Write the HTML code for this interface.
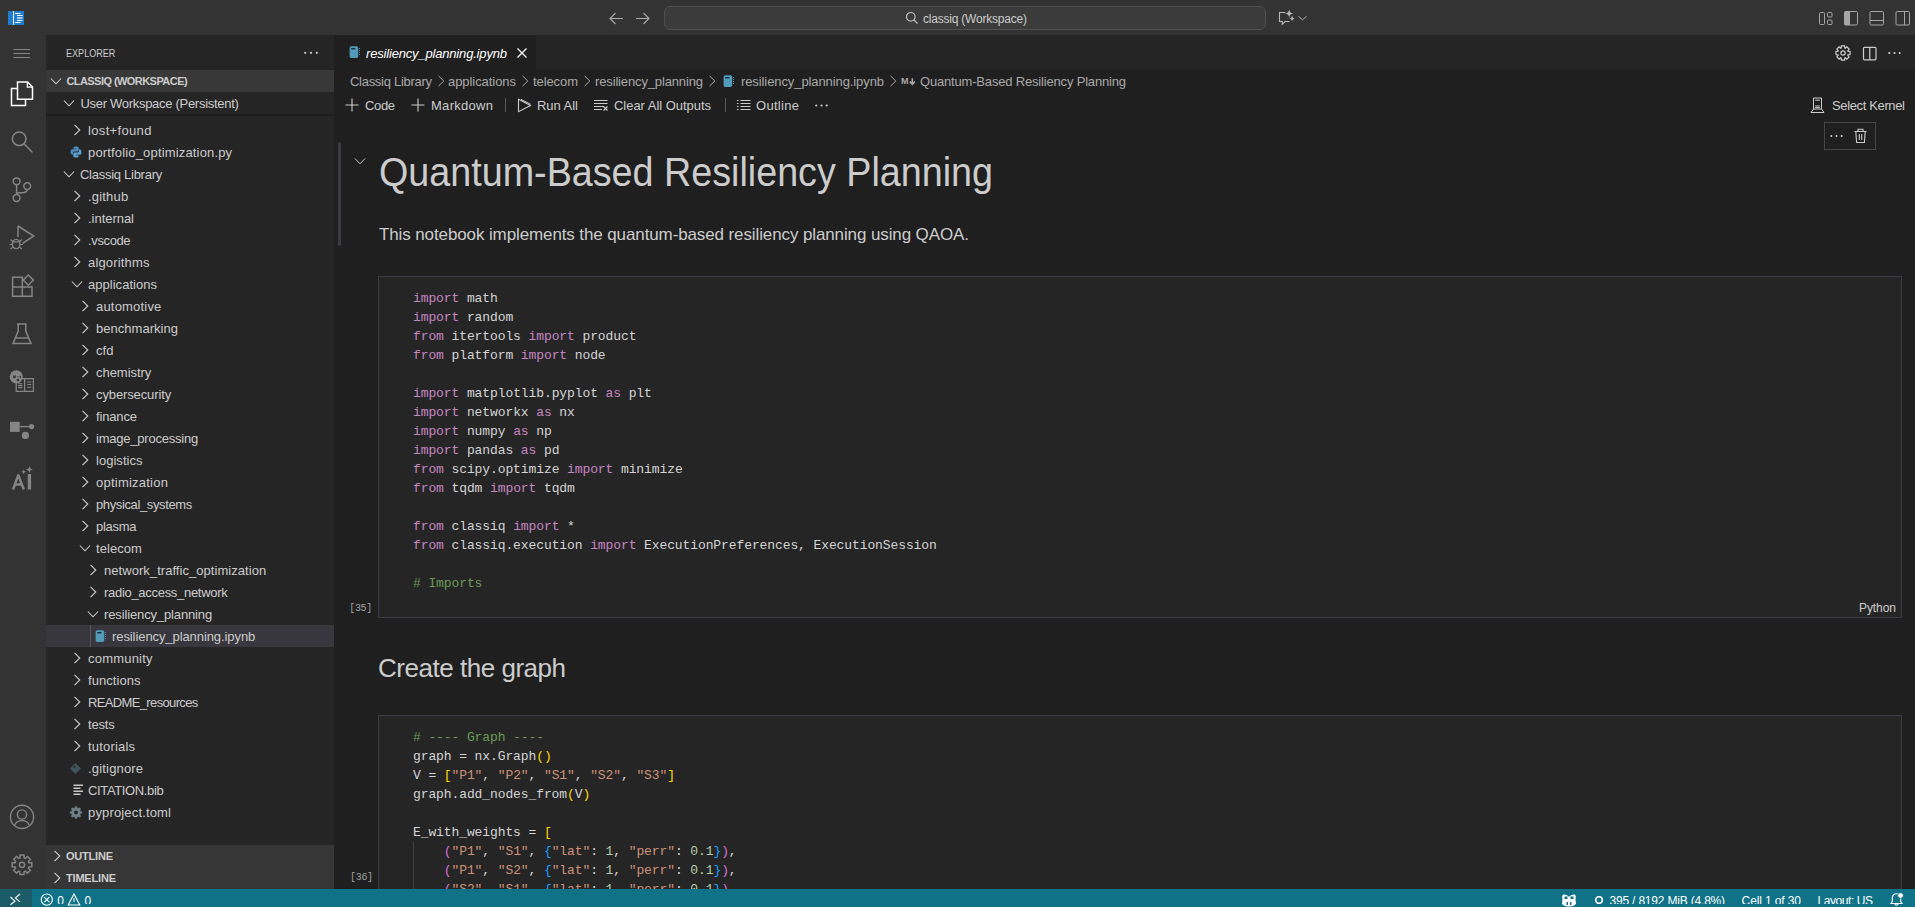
<!DOCTYPE html><html><head><meta charset="utf-8"><style>
*{box-sizing:border-box;margin:0;padding:0}
html,body{width:1915px;height:907px;overflow:hidden;background:#1f1f1f;font-family:"Liberation Sans",sans-serif;color:#cccccc}
div,span,svg{position:absolute}
.t{white-space:nowrap}
svg{overflow:visible}
.code{font-family:"Liberation Mono",monospace;white-space:pre;color:#d4d4d4}
.kw{color:#c586c0}.cm{color:#6a9955}.st{color:#ce9178}.nu{color:#b5cea8}.b1{color:#ffd700}.b2{color:#da70d6}.b3{color:#179fff}
</style></head><body><div style="left:0px;top:0px;width:1915px;height:35px;background:#333333;"></div>
<div style="left:0px;top:35px;width:46px;height:854px;background:#333333;"></div>
<div style="left:46px;top:35px;width:288px;height:854px;background:#252526;"></div>
<div style="left:334px;top:35px;width:1581px;height:35px;background:#252526;"></div>
<div style="left:334px;top:70px;width:1581px;height:819px;background:#1f1f1f;"></div>
<div style="left:0px;top:889px;width:1915px;height:18px;background:#0f7287;"></div>
<svg style="left:8px;top:11px;" width="17" height="15" viewBox="0 0 17 15"><rect x="0" y="0" width="16" height="14" fill="#1f7dd0"/><rect x="5" y="0" width="1" height="14" fill="#fff"/><rect x="7" y="2" width="5.5" height="1" fill="#fff"/><rect x="9" y="4" width="5.5" height="1" fill="#fff"/><rect x="9" y="6" width="5.5" height="2" fill="#a9c9e8"/><rect x="9" y="9" width="5.5" height="1" fill="#fff"/><rect x="7" y="11" width="5.5" height="1" fill="#fff"/></svg>
<svg style="left:609px;top:12px;" width="16" height="13" viewBox="0 0 16 13"><polyline points="6.5,1 1,6.5 6.5,12" fill="none" stroke="#a8a8a8" stroke-width="1.1"/><line x1="1" y1="6.5" x2="14" y2="6.5" stroke="#a8a8a8" stroke-width="1.1"/></svg>
<svg style="left:635px;top:12px;" width="16" height="13" viewBox="0 0 16 13"><polyline points="8.5,1 14,6.5 8.5,12" fill="none" stroke="#a8a8a8" stroke-width="1.1"/><line x1="1" y1="6.5" x2="14" y2="6.5" stroke="#a8a8a8" stroke-width="1.1"/></svg>
<div style="left:664px;top:6px;width:602px;height:24px;background:#3b3b3b;border:1px solid #4f4f4f;border-radius:6px;"></div>
<svg style="left:905px;top:11px;" width="14" height="14" viewBox="0 0 14 14"><circle cx="5.8" cy="5.8" r="4.3" fill="none" stroke="#bdbdbd" stroke-width="1.2"/><line x1="8.8" y1="8.8" x2="12.6" y2="12.6" stroke="#bdbdbd" stroke-width="1.3"/></svg>
<span class="t" style="left:923.00px;top:12.74px;font-size:12px;line-height:13.404px;height:13.40px;color:#cccccc;font-weight:normal;font-style:normal;letter-spacing:-0.212px;">classiq (Workspace)</span>
<svg style="left:1276px;top:8px;" width="34" height="20" viewBox="0 0 34 20"><path d="M9.3,4.5 H3.5 V13.5 H6.2 V16.3 L9.2,13.5 H13.5" fill="none" stroke="#b8b8b8" stroke-width="1.1"/><path d="M13.2,1.2999999999999998 C13.788,4.324 14.376,4.912 17.4,5.5 C14.376,6.088 13.788,6.676 13.2,9.7 C12.611999999999998,6.676 12.024,6.088 9.0,5.5 C12.024,4.912 12.611999999999998,4.324 13.2,1.2999999999999998Z" fill="#b8b8b8"/><path d="M16.1,7.4 C16.534000000000002,9.632 16.968,10.066 19.200000000000003,10.5 C16.968,10.934 16.534000000000002,11.368 16.1,13.6 C15.666000000000002,11.368 15.232000000000001,10.934 13.000000000000002,10.5 C15.232000000000001,10.066 15.666000000000002,9.632 16.1,7.4Z" fill="#b8b8b8"/><path d="M22.4,8.3 L26.5,11.8 L30.6,8.3" fill="none" stroke="#b0b0b0" stroke-width="1"/></svg>
<svg style="left:1818px;top:11px;" width="16" height="15" viewBox="0 0 16 15"><rect x="1.5" y="1.5" width="5" height="12" rx="1" fill="none" stroke="#a6a6a6" stroke-width="1"/><rect x="9.5" y="1.5" width="4.5" height="4.5" rx="1" fill="none" stroke="#a6a6a6" stroke-width="1"/><rect x="9.5" y="9" width="4.5" height="4.5" rx="1" fill="none" stroke="#a6a6a6" stroke-width="1"/></svg>
<svg style="left:1843px;top:11px;" width="16" height="15" viewBox="0 0 16 15"><rect x="1.5" y="0.5" width="13" height="13.5" rx="1.2" fill="none" stroke="#a6a6a6" stroke-width="1"/><rect x="1.5" y="0.5" width="5.5" height="13.5" fill="#a6a6a6"/></svg>
<svg style="left:1869px;top:11px;" width="16" height="15" viewBox="0 0 16 15"><rect x="1" y="0.5" width="13.5" height="13.5" rx="1.2" fill="none" stroke="#a6a6a6" stroke-width="1"/><line x1="1" y1="9.5" x2="14.5" y2="9.5" stroke="#a6a6a6" stroke-width="1"/></svg>
<svg style="left:1895px;top:11px;" width="16" height="15" viewBox="0 0 16 15"><rect x="1" y="0.5" width="13.5" height="13.5" rx="1.2" fill="none" stroke="#a6a6a6" stroke-width="1"/><line x1="9.5" y1="0.5" x2="9.5" y2="14" stroke="#a6a6a6" stroke-width="1"/></svg>
<svg style="left:13px;top:48px;" width="18" height="12" viewBox="0 0 18 12"><line x1="0.5" y1="1.5" x2="17" y2="1.5" stroke="#858585" stroke-width="1"/><line x1="0.5" y1="5.5" x2="17" y2="5.5" stroke="#858585" stroke-width="1"/><line x1="0.5" y1="9.5" x2="17" y2="9.5" stroke="#858585" stroke-width="1"/></svg>
<svg style="left:10px;top:81px;" width="24" height="26" viewBox="0 0 24 26"><path d="M7.5,7.5 H1.5 V24.5 H15.5 V18.5" fill="none" stroke="#ffffff" stroke-width="1.5"/><path d="M7.5,1 H17.5 L22.5,6 V18.2 H7.5 Z" fill="none" stroke="#ffffff" stroke-width="1.5"/><path d="M17.3,1.5 V6.2 H22" fill="none" stroke="#ffffff" stroke-width="1.2"/></svg>
<svg style="left:10px;top:130px;" width="24" height="24" viewBox="0 0 24 24"><circle cx="9.2" cy="8.8" r="6.8" fill="none" stroke="#858585" stroke-width="1.5"/><line x1="14" y1="13.8" x2="22.5" y2="22.5" stroke="#858585" stroke-width="1.5"/></svg>
<svg style="left:10px;top:176px;" width="24" height="26" viewBox="0 0 24 26"><circle cx="6.6" cy="5.3" r="3.4" fill="none" stroke="#858585" stroke-width="1.5"/><circle cx="17.2" cy="10.1" r="3.4" fill="none" stroke="#858585" stroke-width="1.5"/><circle cx="6.6" cy="22" r="3.4" fill="none" stroke="#858585" stroke-width="1.5"/><path d="M6.6,8.7 V18.6" stroke="#858585" stroke-width="1.5" fill="none"/><path d="M17.2,13.5 C17.2,16 15,16.7 12,16.7 H9 C7.5,16.7 6.6,17.5 6.6,18.6" stroke="#858585" stroke-width="1.5" fill="none"/></svg>
<svg style="left:8px;top:224px;" width="28" height="26" viewBox="0 0 28 26"><path d="M10,2 L25.8,12 L14.5,19.3" fill="none" stroke="#858585" stroke-width="1.5"/><path d="M10,2 V13" fill="none" stroke="#858585" stroke-width="1.5"/><ellipse cx="8.2" cy="20" rx="3.8" ry="4.6" fill="none" stroke="#858585" stroke-width="1.4"/><path d="M5,17.8 H11.4 M2.5,15.5 L5,17.5 M13.9,15.5 L11.4,17.5 M1.5,20.5 H4.4 M12,20.5 H15 M2.5,25 L5,23 M13.9,25 L11.4,23" stroke="#858585" stroke-width="1.2" fill="none"/></svg>
<svg style="left:10px;top:272px;" width="24" height="26" viewBox="0 0 24 26"><path d="M2.6,5.3 H12.3 V24.2 H2.6 Z M2.6,15 H22 V24.2 H12.3" fill="none" stroke="#858585" stroke-width="1.5"/><path d="M18.3,3 L23.4,8.1 18.3,13.2 13.2,8.1 Z" fill="none" stroke="#858585" stroke-width="1.5"/></svg>
<svg style="left:10px;top:320px;" width="24" height="26" viewBox="0 0 24 26"><path d="M7,4 H16.7 M8.2,4 V11 L3,23.6 H21 L15.8,11 V4 M5.4,18 H18.6" fill="none" stroke="#858585" stroke-width="1.5"/></svg>
<svg style="left:8px;top:368px;" width="28" height="26" viewBox="0 0 28 26"><path d="M8.2,10.7 V23.4 H16.6 V10.7 Z M16.6,10.7 V23.4 H25.4 V10.7 Z" fill="#333" stroke="#858585" stroke-width="1.3"/><path d="M10.2,15.8 H14.4 M10.2,17.6 H14.4 M10.2,19.6 H14.4 M19.2,14 H23.2 M19.2,16.5 H23.2 M19.2,19.3 H23.2" stroke="#858585" stroke-width="1.1"/><circle cx="8.3" cy="8.8" r="6.6" fill="#858585"/><rect x="5.2" y="7.5" width="2.6" height="2.6" fill="#333"/><rect x="8.8" y="8.2" width="1.8" height="1.2" fill="#5a5a5a"/><circle cx="12.3" cy="8.8" r="0.9" fill="#333"/><circle cx="9.9" cy="12" r="1.3" fill="#333"/></svg>
<svg style="left:8px;top:418px;" width="28" height="22" viewBox="0 0 28 22"><rect x="2" y="3.8" width="9.7" height="10.1" fill="#858585"/><line x1="11.7" y1="8.6" x2="23" y2="8.6" stroke="#858585" stroke-width="1.4"/><circle cx="23.6" cy="8.6" r="2.6" fill="#858585"/><circle cx="17.4" cy="17.4" r="3.6" fill="#858585"/></svg>
<svg style="left:8px;top:470px;" width="22" height="22" viewBox="0 0 22 22"><path d="M5,19.5 L10.3,5.2 L15.8,19.5 M7,14.5 H13.8" fill="none" stroke="#858585" stroke-width="2.4" stroke-linejoin="round"/></svg>
<svg style="left:26px;top:466px;" width="10" height="26" viewBox="0 0 10 26"><rect x="1.8" y="8" width="3.3" height="15.5" fill="#858585"/><path d="M3.4,0 L4.3,2.6 6.9,3.5 4.3,4.4 3.4,7 2.5,4.4 -0.1,3.5 2.5,2.6Z" fill="#858585"/><path d="M-2.4,3.4 L-1.7,5.1 0,5.8 -1.7,6.5 -2.4,8.2 -3.1,6.5 -4.8,5.8 -3.1,5.1Z" fill="#858585"/></svg>
<svg style="left:9px;top:804px;" width="26" height="26" viewBox="0 0 26 26"><circle cx="13" cy="12.9" r="11.6" fill="none" stroke="#858585" stroke-width="1.4"/><circle cx="13" cy="10.5" r="4.6" fill="none" stroke="#858585" stroke-width="1.4"/><path d="M6,21 C6.8,17.8 9.5,16.6 13,16.6 C16.5,16.6 19.2,17.8 20,21" fill="none" stroke="#858585" stroke-width="1.4"/></svg>
<svg style="left:9px;top:852px;" width="26" height="26" viewBox="0 0 26 26"><polygon points="10.87,5.92 11.01,3.00 14.99,3.00 15.13,5.92 16.36,6.43 18.53,4.47 21.33,7.27 19.37,9.44 19.88,10.67 22.80,10.81 22.80,14.79 19.88,14.93 19.37,16.16 21.33,18.33 18.53,21.13 16.36,19.17 15.13,19.68 14.99,22.60 11.01,22.60 10.87,19.68 9.64,19.17 7.47,21.13 4.67,18.33 6.63,16.16 6.12,14.93 3.20,14.79 3.20,10.81 6.12,10.67 6.63,9.44 4.67,7.27 7.47,4.47 9.64,6.43" fill="none" stroke="#858585" stroke-width="1.5" stroke-linejoin="miter"/><circle cx="13" cy="12.8" r="2.6" fill="none" stroke="#858585" stroke-width="1.5"/></svg>
<span class="t" style="left:66.40px;top:47.34px;font-size:11px;line-height:12.287px;height:12.29px;color:#cccccc;font-weight:normal;font-style:normal;letter-spacing:0.000px;transform:scaleX(0.8246);transform-origin:0 0;">EXPLORER</span>
<svg style="left:303px;top:50px;" width="18" height="6" viewBox="0 0 18 6"><circle cx="2.2" cy="2.8" r="1.1" fill="#cccccc"/><circle cx="8" cy="2.8" r="1.1" fill="#cccccc"/><circle cx="13.8" cy="2.8" r="1.1" fill="#cccccc"/></svg>
<div style="left:46px;top:70px;width:288px;height:22px;background:#383838;"></div>
<svg style="left:50px;top:77px;" width="12" height="8" viewBox="0 0 12 8"><polyline points="0.9,1.5 6,6.8 11.1,1.5" fill="none" stroke="#d0d0d0" stroke-width="1.05"/></svg>
<span class="t" style="left:66.40px;top:75.34px;font-size:11px;line-height:12.287px;height:12.29px;color:#cccccc;font-weight:bold;font-style:normal;letter-spacing:-0.555px;">CLASSIQ (WORKSPACE)</span>
<div style="left:46px;top:92px;width:288px;height:22px;background:#252526;"></div>
<svg style="left:63px;top:99px;" width="12" height="8" viewBox="0 0 12 8"><polyline points="0.9,1.5 6,6.8 11.1,1.5" fill="none" stroke="#d0d0d0" stroke-width="1.05"/></svg>
<span class="t" style="left:80.40px;top:96.64px;font-size:13px;line-height:14.521px;height:14.52px;color:#cccccc;font-weight:normal;font-style:normal;letter-spacing:-0.289px;">User Workspace (Persistent)</span>
<div style="left:46px;top:114px;width:288px;height:3px;background:linear-gradient(#1a1a1a,#252526);"></div>
<svg style="left:73px;top:124px;" width="8" height="12" viewBox="0 0 8 12"><polyline points="1.5,0.9 6.8,6 1.5,11.1" fill="none" stroke="#d0d0d0" stroke-width="1.05"/></svg>
<span class="t" style="left:88.00px;top:123.64px;font-size:13px;line-height:14.521px;height:14.52px;color:#cccccc;font-weight:normal;font-style:normal;letter-spacing:0.338px;">lost+found</span>
<svg style="left:70px;top:146px;" width="12" height="12" viewBox="0 0 12 12"><path d="M5.8,0.5 C3.2,0.5 3.4,1.6 3.4,1.6 V2.8 H5.9 V3.2 H2.3 C2.3,3.2 0.5,3 0.5,5.8 C0.5,8.5 2.1,8.4 2.1,8.4 H3.1 V7.1 C3.1,7.1 3,5.5 4.6,5.5 H7.2 C7.2,5.5 8.7,5.5 8.7,4.1 V1.8 C8.7,1.8 8.9,0.5 5.8,0.5Z" fill="#4d8cc0"/><path d="M6.2,11.5 C8.8,11.5 8.6,10.4 8.6,10.4 V9.2 H6.1 V8.8 H9.7 C9.7,8.8 11.5,9 11.5,6.2 C11.5,3.5 9.9,3.6 9.9,3.6 H8.9 V4.9 C8.9,4.9 9,6.5 7.4,6.5 H4.8 C4.8,6.5 3.3,6.5 3.3,7.9 V10.2 C3.3,10.2 3.1,11.5 6.2,11.5Z" fill="#5a9fd0"/></svg>
<span class="t" style="left:88.00px;top:145.63px;font-size:13px;line-height:14.521px;height:14.52px;color:#cccccc;font-weight:normal;font-style:normal;letter-spacing:0.163px;">portfolio_optimization.py</span>
<svg style="left:63px;top:170px;" width="12" height="8" viewBox="0 0 12 8"><polyline points="0.9,1.5 6,6.8 11.1,1.5" fill="none" stroke="#d0d0d0" stroke-width="1.05"/></svg>
<span class="t" style="left:80.00px;top:167.63px;font-size:13px;line-height:14.521px;height:14.52px;color:#cccccc;font-weight:normal;font-style:normal;letter-spacing:-0.270px;">Classiq Library</span>
<svg style="left:73px;top:190px;" width="8" height="12" viewBox="0 0 8 12"><polyline points="1.5,0.9 6.8,6 1.5,11.1" fill="none" stroke="#d0d0d0" stroke-width="1.05"/></svg>
<span class="t" style="left:88.00px;top:189.63px;font-size:13px;line-height:14.521px;height:14.52px;color:#cccccc;font-weight:normal;font-style:normal;letter-spacing:0.195px;">.github</span>
<svg style="left:73px;top:212px;" width="8" height="12" viewBox="0 0 8 12"><polyline points="1.5,0.9 6.8,6 1.5,11.1" fill="none" stroke="#d0d0d0" stroke-width="1.05"/></svg>
<span class="t" style="left:88.00px;top:211.63px;font-size:13px;line-height:14.521px;height:14.52px;color:#cccccc;font-weight:normal;font-style:normal;letter-spacing:-0.031px;">.internal</span>
<svg style="left:73px;top:234px;" width="8" height="12" viewBox="0 0 8 12"><polyline points="1.5,0.9 6.8,6 1.5,11.1" fill="none" stroke="#d0d0d0" stroke-width="1.05"/></svg>
<span class="t" style="left:88.00px;top:233.63px;font-size:13px;line-height:14.521px;height:14.52px;color:#cccccc;font-weight:normal;font-style:normal;letter-spacing:-0.367px;">.vscode</span>
<svg style="left:73px;top:256px;" width="8" height="12" viewBox="0 0 8 12"><polyline points="1.5,0.9 6.8,6 1.5,11.1" fill="none" stroke="#d0d0d0" stroke-width="1.05"/></svg>
<span class="t" style="left:88.00px;top:255.63px;font-size:13px;line-height:14.521px;height:14.52px;color:#cccccc;font-weight:normal;font-style:normal;letter-spacing:0.159px;">algorithms</span>
<svg style="left:71px;top:280px;" width="12" height="8" viewBox="0 0 12 8"><polyline points="0.9,1.5 6,6.8 11.1,1.5" fill="none" stroke="#d0d0d0" stroke-width="1.05"/></svg>
<span class="t" style="left:88.00px;top:277.63px;font-size:13px;line-height:14.521px;height:14.52px;color:#cccccc;font-weight:normal;font-style:normal;letter-spacing:0.031px;">applications</span>
<svg style="left:81px;top:300px;" width="8" height="12" viewBox="0 0 8 12"><polyline points="1.5,0.9 6.8,6 1.5,11.1" fill="none" stroke="#d0d0d0" stroke-width="1.05"/></svg>
<span class="t" style="left:96.00px;top:299.63px;font-size:13px;line-height:14.521px;height:14.52px;color:#cccccc;font-weight:normal;font-style:normal;letter-spacing:0.190px;">automotive</span>
<svg style="left:81px;top:322px;" width="8" height="12" viewBox="0 0 8 12"><polyline points="1.5,0.9 6.8,6 1.5,11.1" fill="none" stroke="#d0d0d0" stroke-width="1.05"/></svg>
<span class="t" style="left:96.00px;top:321.63px;font-size:13px;line-height:14.521px;height:14.52px;color:#cccccc;font-weight:normal;font-style:normal;letter-spacing:0.031px;">benchmarking</span>
<svg style="left:81px;top:344px;" width="8" height="12" viewBox="0 0 8 12"><polyline points="1.5,0.9 6.8,6 1.5,11.1" fill="none" stroke="#d0d0d0" stroke-width="1.05"/></svg>
<span class="t" style="left:96.00px;top:343.63px;font-size:13px;line-height:14.521px;height:14.52px;color:#cccccc;font-weight:normal;font-style:normal;letter-spacing:0.029px;">cfd</span>
<svg style="left:81px;top:366px;" width="8" height="12" viewBox="0 0 8 12"><polyline points="1.5,0.9 6.8,6 1.5,11.1" fill="none" stroke="#d0d0d0" stroke-width="1.05"/></svg>
<span class="t" style="left:96.00px;top:365.63px;font-size:13px;line-height:14.521px;height:14.52px;color:#cccccc;font-weight:normal;font-style:normal;letter-spacing:-0.040px;">chemistry</span>
<svg style="left:81px;top:388px;" width="8" height="12" viewBox="0 0 8 12"><polyline points="1.5,0.9 6.8,6 1.5,11.1" fill="none" stroke="#d0d0d0" stroke-width="1.05"/></svg>
<span class="t" style="left:96.00px;top:387.63px;font-size:13px;line-height:14.521px;height:14.52px;color:#cccccc;font-weight:normal;font-style:normal;letter-spacing:-0.115px;">cybersecurity</span>
<svg style="left:81px;top:410px;" width="8" height="12" viewBox="0 0 8 12"><polyline points="1.5,0.9 6.8,6 1.5,11.1" fill="none" stroke="#d0d0d0" stroke-width="1.05"/></svg>
<span class="t" style="left:96.00px;top:409.63px;font-size:13px;line-height:14.521px;height:14.52px;color:#cccccc;font-weight:normal;font-style:normal;letter-spacing:-0.153px;">finance</span>
<svg style="left:81px;top:432px;" width="8" height="12" viewBox="0 0 8 12"><polyline points="1.5,0.9 6.8,6 1.5,11.1" fill="none" stroke="#d0d0d0" stroke-width="1.05"/></svg>
<span class="t" style="left:96.00px;top:431.63px;font-size:13px;line-height:14.521px;height:14.52px;color:#cccccc;font-weight:normal;font-style:normal;letter-spacing:-0.214px;">image_processing</span>
<svg style="left:81px;top:454px;" width="8" height="12" viewBox="0 0 8 12"><polyline points="1.5,0.9 6.8,6 1.5,11.1" fill="none" stroke="#d0d0d0" stroke-width="1.05"/></svg>
<span class="t" style="left:96.00px;top:453.63px;font-size:13px;line-height:14.521px;height:14.52px;color:#cccccc;font-weight:normal;font-style:normal;letter-spacing:0.033px;">logistics</span>
<svg style="left:81px;top:476px;" width="8" height="12" viewBox="0 0 8 12"><polyline points="1.5,0.9 6.8,6 1.5,11.1" fill="none" stroke="#d0d0d0" stroke-width="1.05"/></svg>
<span class="t" style="left:96.00px;top:475.63px;font-size:13px;line-height:14.521px;height:14.52px;color:#cccccc;font-weight:normal;font-style:normal;letter-spacing:0.230px;">optimization</span>
<svg style="left:81px;top:498px;" width="8" height="12" viewBox="0 0 8 12"><polyline points="1.5,0.9 6.8,6 1.5,11.1" fill="none" stroke="#d0d0d0" stroke-width="1.05"/></svg>
<span class="t" style="left:96.00px;top:497.63px;font-size:13px;line-height:14.521px;height:14.52px;color:#cccccc;font-weight:normal;font-style:normal;letter-spacing:-0.378px;">physical_systems</span>
<svg style="left:81px;top:520px;" width="8" height="12" viewBox="0 0 8 12"><polyline points="1.5,0.9 6.8,6 1.5,11.1" fill="none" stroke="#d0d0d0" stroke-width="1.05"/></svg>
<span class="t" style="left:96.00px;top:519.63px;font-size:13px;line-height:14.521px;height:14.52px;color:#cccccc;font-weight:normal;font-style:normal;letter-spacing:-0.302px;">plasma</span>
<svg style="left:79px;top:544px;" width="12" height="8" viewBox="0 0 12 8"><polyline points="0.9,1.5 6,6.8 11.1,1.5" fill="none" stroke="#d0d0d0" stroke-width="1.05"/></svg>
<span class="t" style="left:96.00px;top:541.63px;font-size:13px;line-height:14.521px;height:14.52px;color:#cccccc;font-weight:normal;font-style:normal;letter-spacing:0.063px;">telecom</span>
<svg style="left:89px;top:564px;" width="8" height="12" viewBox="0 0 8 12"><polyline points="1.5,0.9 6.8,6 1.5,11.1" fill="none" stroke="#d0d0d0" stroke-width="1.05"/></svg>
<span class="t" style="left:104.00px;top:563.63px;font-size:13px;line-height:14.521px;height:14.52px;color:#cccccc;font-weight:normal;font-style:normal;letter-spacing:0.048px;">network_traffic_optimization</span>
<svg style="left:89px;top:586px;" width="8" height="12" viewBox="0 0 8 12"><polyline points="1.5,0.9 6.8,6 1.5,11.1" fill="none" stroke="#d0d0d0" stroke-width="1.05"/></svg>
<span class="t" style="left:104.00px;top:585.63px;font-size:13px;line-height:14.521px;height:14.52px;color:#cccccc;font-weight:normal;font-style:normal;letter-spacing:-0.297px;">radio_access_network</span>
<svg style="left:87px;top:610px;" width="12" height="8" viewBox="0 0 12 8"><polyline points="0.9,1.5 6,6.8 11.1,1.5" fill="none" stroke="#d0d0d0" stroke-width="1.05"/></svg>
<span class="t" style="left:104.00px;top:607.63px;font-size:13px;line-height:14.521px;height:14.52px;color:#cccccc;font-weight:normal;font-style:normal;letter-spacing:-0.132px;">resiliency_planning</span>
<div style="left:46px;top:625px;width:288px;height:22px;background:#37373d;"></div>
<svg style="left:94.5px;top:630px;" width="12" height="13" viewBox="0 0 12 13"><rect x="0.6" y="0.3" width="8.6" height="11.6" rx="1.6" fill="#519aba"/><rect x="2.2" y="2" width="4.2" height="1.4" fill="#1d2d38"/><path d="M10,2.5 h0.9 M10,4.5 h0.9 M10,6.5 h0.9 M10,8.5 h0.9" stroke="#519aba" stroke-width="1.1"/></svg>
<span class="t" style="left:112.00px;top:629.63px;font-size:13px;line-height:14.521px;height:14.52px;color:#cccccc;font-weight:normal;font-style:normal;letter-spacing:-0.082px;">resiliency_planning.ipynb</span>
<svg style="left:73px;top:652px;" width="8" height="12" viewBox="0 0 8 12"><polyline points="1.5,0.9 6.8,6 1.5,11.1" fill="none" stroke="#d0d0d0" stroke-width="1.05"/></svg>
<span class="t" style="left:88.00px;top:651.63px;font-size:13px;line-height:14.521px;height:14.52px;color:#cccccc;font-weight:normal;font-style:normal;letter-spacing:0.206px;">community</span>
<svg style="left:73px;top:674px;" width="8" height="12" viewBox="0 0 8 12"><polyline points="1.5,0.9 6.8,6 1.5,11.1" fill="none" stroke="#d0d0d0" stroke-width="1.05"/></svg>
<span class="t" style="left:88.00px;top:673.63px;font-size:13px;line-height:14.521px;height:14.52px;color:#cccccc;font-weight:normal;font-style:normal;letter-spacing:0.071px;">functions</span>
<svg style="left:73px;top:696px;" width="8" height="12" viewBox="0 0 8 12"><polyline points="1.5,0.9 6.8,6 1.5,11.1" fill="none" stroke="#d0d0d0" stroke-width="1.05"/></svg>
<span class="t" style="left:88.00px;top:695.63px;font-size:13px;line-height:14.521px;height:14.52px;color:#cccccc;font-weight:normal;font-style:normal;letter-spacing:-0.642px;">README_resources</span>
<svg style="left:73px;top:718px;" width="8" height="12" viewBox="0 0 8 12"><polyline points="1.5,0.9 6.8,6 1.5,11.1" fill="none" stroke="#d0d0d0" stroke-width="1.05"/></svg>
<span class="t" style="left:88.00px;top:717.63px;font-size:13px;line-height:14.521px;height:14.52px;color:#cccccc;font-weight:normal;font-style:normal;letter-spacing:-0.163px;">tests</span>
<svg style="left:73px;top:740px;" width="8" height="12" viewBox="0 0 8 12"><polyline points="1.5,0.9 6.8,6 1.5,11.1" fill="none" stroke="#d0d0d0" stroke-width="1.05"/></svg>
<span class="t" style="left:88.00px;top:739.63px;font-size:13px;line-height:14.521px;height:14.52px;color:#cccccc;font-weight:normal;font-style:normal;letter-spacing:0.185px;">tutorials</span>
<svg style="left:69px;top:762px;" width="13" height="13" viewBox="0 0 13 13"><path d="M6.5,1 L12,6.5 6.5,12 1,6.5Z" fill="#41535b"/><circle cx="5.5" cy="5" r="1" fill="#252526"/></svg>
<span class="t" style="left:88.00px;top:761.63px;font-size:13px;line-height:14.521px;height:14.52px;color:#cccccc;font-weight:normal;font-style:normal;letter-spacing:0.180px;">.gitignore</span>
<svg style="left:73px;top:784px;" width="12" height="12" viewBox="0 0 12 12"><path d="M0.5,1.3 H10 M0.5,4.3 H7.5 M0.5,7.3 H10 M0.5,10.3 H7.5" stroke="#c8c8c8" stroke-width="1.5"/></svg>
<span class="t" style="left:88.00px;top:783.63px;font-size:13px;line-height:14.521px;height:14.52px;color:#cccccc;font-weight:normal;font-style:normal;letter-spacing:-0.363px;">CITATION.bib</span>
<svg style="left:69px;top:805px;" width="14" height="14" viewBox="0 0 14 14"><polygon points="6.41,1.53 7.59,1.53 8.28,3.29 9.07,3.62 10.81,2.86 11.64,3.69 10.88,5.43 11.21,6.22 12.97,6.91 12.97,8.09 11.21,8.78 10.88,9.57 11.64,11.31 10.81,12.14 9.07,11.38 8.28,11.71 7.59,13.47 6.41,13.47 5.72,11.71 4.93,11.38 3.19,12.14 2.36,11.31 3.12,9.57 2.79,8.78 1.03,8.09 1.03,6.91 2.79,6.22 3.12,5.43 2.36,3.69 3.19,2.86 4.93,3.62 5.72,3.29" fill="#6d8086" stroke="#6d8086" stroke-width="0.6" stroke-linejoin="round"/><circle cx="7" cy="7.5" r="3.74" fill="#6d8086"/><circle cx="7" cy="7.5" r="1.9" fill="#252526"/></svg>
<span class="t" style="left:88.00px;top:805.63px;font-size:13px;line-height:14.521px;height:14.52px;color:#cccccc;font-weight:normal;font-style:normal;letter-spacing:0.160px;">pyproject.toml</span>
<div style="left:90px;top:625px;width:1px;height:22px;background:#585858;"></div>
<div style="left:46px;top:845px;width:288px;height:44px;background:#363636;"></div>
<svg style="left:53px;top:850px;" width="8" height="12" viewBox="0 0 8 12"><polyline points="1.5,0.9 6.8,6 1.5,11.1" fill="none" stroke="#d0d0d0" stroke-width="1.05"/></svg>
<span class="t" style="left:66.00px;top:850.04px;font-size:11px;line-height:12.287px;height:12.29px;color:#cccccc;font-weight:bold;font-style:normal;letter-spacing:-0.213px;">OUTLINE</span>
<svg style="left:53px;top:872px;" width="8" height="12" viewBox="0 0 8 12"><polyline points="1.5,0.9 6.8,6 1.5,11.1" fill="none" stroke="#d0d0d0" stroke-width="1.05"/></svg>
<span class="t" style="left:66.00px;top:872.04px;font-size:11px;line-height:12.287px;height:12.29px;color:#cccccc;font-weight:bold;font-style:normal;letter-spacing:-0.190px;">TIMELINE</span>
<div style="left:334px;top:35px;width:202px;height:35px;background:#1f1f1f;"></div>
<svg style="left:348.5px;top:46px;" width="12" height="13" viewBox="0 0 12 13"><rect x="0.6" y="0.3" width="8.6" height="11.6" rx="1.6" fill="#519aba"/><rect x="2.2" y="2" width="4.2" height="1.4" fill="#1d2d38"/><path d="M10,2.5 h0.9 M10,4.5 h0.9 M10,6.5 h0.9 M10,8.5 h0.9" stroke="#519aba" stroke-width="1.1"/></svg>
<span class="t" style="left:366.00px;top:46.73px;font-size:13px;line-height:14.521px;height:14.52px;color:#ffffff;font-weight:normal;font-style:italic;letter-spacing:-0.178px;">resiliency_planning.ipynb</span>
<svg style="left:516px;top:47px;" width="12" height="12" viewBox="0 0 12 12"><path d="M1.5,1.5 L10.5,10.5 M10.5,1.5 L1.5,10.5" stroke="#ffffff" stroke-width="1.3"/></svg>
<svg style="left:1834px;top:44px;" width="18" height="18" viewBox="0 0 18 18"><polygon points="7.17,4.13 7.43,1.97 10.57,1.97 10.83,4.13 11.15,4.26 12.86,2.92 15.08,5.14 13.74,6.85 13.87,7.17 16.03,7.43 16.03,10.57 13.87,10.83 13.74,11.15 15.08,12.86 12.86,15.08 11.15,13.74 10.83,13.87 10.57,16.03 7.43,16.03 7.17,13.87 6.85,13.74 5.14,15.08 2.92,12.86 4.26,11.15 4.13,10.83 1.97,10.57 1.97,7.43 4.13,7.17 4.26,6.85 2.92,5.14 5.14,2.92 6.85,4.26" fill="none" stroke="#cccccc" stroke-width="1.2" stroke-linejoin="miter"/><circle cx="9" cy="9" r="2.2" fill="none" stroke="#cccccc" stroke-width="1.2"/></svg>
<svg style="left:1862px;top:46px;" width="16" height="15" viewBox="0 0 16 15"><rect x="1.5" y="1.3" width="12.5" height="12.5" rx="1" fill="none" stroke="#cccccc" stroke-width="1.2"/><line x1="7.75" y1="1.3" x2="7.75" y2="13.8" stroke="#cccccc" stroke-width="1.2"/></svg>
<svg style="left:1887px;top:50px;" width="16" height="6" viewBox="0 0 16 6"><circle cx="2.3" cy="3" r="1.1" fill="#cccccc"/><circle cx="7.5" cy="3" r="1.1" fill="#cccccc"/><circle cx="12.7" cy="3" r="1.1" fill="#cccccc"/></svg>
<span class="t" style="left:350.00px;top:75.14px;font-size:13px;line-height:14.521px;height:14.52px;color:#a9a9a9;font-weight:normal;font-style:normal;letter-spacing:-0.284px;">Classiq Library</span>
<span class="t" style="left:448.00px;top:75.14px;font-size:13px;line-height:14.521px;height:14.52px;color:#a9a9a9;font-weight:normal;font-style:normal;letter-spacing:-0.060px;">applications</span>
<span class="t" style="left:533.00px;top:75.14px;font-size:13px;line-height:14.521px;height:14.52px;color:#a9a9a9;font-weight:normal;font-style:normal;letter-spacing:-0.087px;">telecom</span>
<span class="t" style="left:595.00px;top:75.14px;font-size:13px;line-height:14.521px;height:14.52px;color:#a9a9a9;font-weight:normal;font-style:normal;letter-spacing:-0.143px;">resiliency_planning</span>
<svg style="left:436.5px;top:75px;" width="8" height="12" viewBox="0 0 8 12"><polyline points="1.5,0.9 6.8,6 1.5,11.1" fill="none" stroke="#a9a9a9" stroke-width="1.0"/></svg>
<svg style="left:520.5px;top:75px;" width="8" height="12" viewBox="0 0 8 12"><polyline points="1.5,0.9 6.8,6 1.5,11.1" fill="none" stroke="#a9a9a9" stroke-width="1.0"/></svg>
<svg style="left:582.5px;top:75px;" width="8" height="12" viewBox="0 0 8 12"><polyline points="1.5,0.9 6.8,6 1.5,11.1" fill="none" stroke="#a9a9a9" stroke-width="1.0"/></svg>
<svg style="left:707.5px;top:75px;" width="8" height="12" viewBox="0 0 8 12"><polyline points="1.5,0.9 6.8,6 1.5,11.1" fill="none" stroke="#a9a9a9" stroke-width="1.0"/></svg>
<svg style="left:888.5px;top:75px;" width="8" height="12" viewBox="0 0 8 12"><polyline points="1.5,0.9 6.8,6 1.5,11.1" fill="none" stroke="#a9a9a9" stroke-width="1.0"/></svg>
<svg style="left:723px;top:75px;" width="12" height="13" viewBox="0 0 12 13"><rect x="0.6" y="0.3" width="8.6" height="11.6" rx="1.6" fill="#519aba"/><rect x="2.2" y="2" width="4.2" height="1.4" fill="#1d2d38"/><path d="M10,2.5 h0.9 M10,4.5 h0.9 M10,6.5 h0.9 M10,8.5 h0.9" stroke="#519aba" stroke-width="1.1"/></svg>
<span class="t" style="left:741.00px;top:75.14px;font-size:13px;line-height:14.521px;height:14.52px;color:#a9a9a9;font-weight:normal;font-style:normal;letter-spacing:-0.094px;">resiliency_planning.ipynb</span>
<span class="t" style="left:901.00px;top:76.45px;font-size:9px;line-height:10.053px;height:10.05px;color:#a9a9a9;font-weight:bold;font-style:normal;letter-spacing:0.000px;">M</span>
<svg style="left:909px;top:77.5px;" width="7" height="8" viewBox="0 0 7 8"><path d="M3.3,0.3 V6 M0.8,3.6 L3.3,6.3 5.8,3.6" fill="none" stroke="#a9a9a9" stroke-width="1.6"/></svg>
<span class="t" style="left:920.00px;top:75.14px;font-size:13px;line-height:14.521px;height:14.52px;color:#a9a9a9;font-weight:normal;font-style:normal;letter-spacing:-0.179px;">Quantum-Based Resiliency Planning</span>
<svg style="left:344px;top:97px;" width="16" height="16" viewBox="0 0 16 16"><path d="M8,1.5 V14.5 M1.5,8 H14.5" stroke="#cccccc" stroke-width="1.1"/></svg>
<span class="t" style="left:365.00px;top:99.23px;font-size:13px;line-height:14.521px;height:14.52px;color:#cccccc;font-weight:normal;font-style:normal;letter-spacing:-0.360px;">Code</span>
<svg style="left:410px;top:97px;" width="16" height="16" viewBox="0 0 16 16"><path d="M8,1.5 V14.5 M1.5,8 H14.5" stroke="#cccccc" stroke-width="1.1"/></svg>
<span class="t" style="left:431.00px;top:99.23px;font-size:13px;line-height:14.521px;height:14.52px;color:#cccccc;font-weight:normal;font-style:normal;letter-spacing:0.290px;">Markdown</span>
<div style="left:505px;top:98px;width:1px;height:14px;background:#585858;"></div>
<svg style="left:516px;top:98px;" width="18" height="15" viewBox="0 0 18 15"><path d="M2.5,1.3 L14.5,7.5 2.5,13.7 Z" fill="none" stroke="#cccccc" stroke-width="1.1"/><path d="M5,1.3 L14.5,6.2" fill="none" stroke="#cccccc" stroke-width="1"/></svg>
<span class="t" style="left:537.00px;top:99.23px;font-size:13px;line-height:14.521px;height:14.52px;color:#cccccc;font-weight:normal;font-style:normal;letter-spacing:-0.032px;">Run All</span>
<svg style="left:593px;top:99px;" width="16" height="13" viewBox="0 0 16 13"><path d="M1,1.5 H14.5 M1,4.5 H14.5 M1,7.5 H11 M1,10.5 H9" stroke="#cccccc" stroke-width="1.1"/><path d="M10.5,7.5 L14.5,11.5 M14.5,7.5 L10.5,11.5" stroke="#cccccc" stroke-width="1.1"/></svg>
<span class="t" style="left:614.00px;top:99.23px;font-size:13px;line-height:14.521px;height:14.52px;color:#cccccc;font-weight:normal;font-style:normal;letter-spacing:-0.034px;">Clear All Outputs</span>
<div style="left:725px;top:98px;width:1px;height:14px;background:#585858;"></div>
<svg style="left:736px;top:99px;" width="16" height="13" viewBox="0 0 16 13"><path d="M1,1.5 H2.5 M1,4.5 H2.5 M1,7.5 H2.5 M1,10.5 H2.5 M4.5,1.5 H14.5 M4.5,4.5 H14.5 M4.5,7.5 H14.5 M4.5,10.5 H14.5" stroke="#cccccc" stroke-width="1.1"/></svg>
<span class="t" style="left:756.00px;top:99.23px;font-size:13px;line-height:14.521px;height:14.52px;color:#cccccc;font-weight:normal;font-style:normal;letter-spacing:0.302px;">Outline</span>
<svg style="left:814px;top:103px;" width="16" height="6" viewBox="0 0 16 6"><circle cx="2.3" cy="2.5" r="1.1" fill="#cccccc"/><circle cx="7.5" cy="2.5" r="1.1" fill="#cccccc"/><circle cx="12.7" cy="2.5" r="1.1" fill="#cccccc"/></svg>
<svg style="left:1810px;top:97px;" width="16" height="17" viewBox="0 0 16 17"><path d="M3.5,1 H11.5 V12 H3.5 Z M5.2,3.2 H9.8 M5.2,9 H9.8 M5.2,10.6 H9.8 M3.5,12 L1,15.5 H14 L11.5,12" fill="none" stroke="#cccccc" stroke-width="1"/></svg>
<span class="t" style="left:1832.00px;top:98.83px;font-size:13px;line-height:14.521px;height:14.52px;color:#cccccc;font-weight:normal;font-style:normal;letter-spacing:-0.360px;">Select Kernel</span>
<div style="left:338px;top:142px;width:3px;height:104px;background:#3a3a40;border-radius:2px;"></div>
<svg style="left:354px;top:157px;" width="12" height="8" viewBox="0 0 12 8"><polyline points="0.9,1.5 6,6.8 11.1,1.5" fill="none" stroke="#cccccc" stroke-width="1.0"/></svg>
<span class="t" style="left:378.60px;top:149.80px;font-size:40px;line-height:44.680px;height:44.68px;color:#cccccc;font-weight:normal;font-style:normal;letter-spacing:0.000px;transform:scaleX(0.9425);transform-origin:0 0;">Quantum-Based Resiliency Planning</span>
<span class="t" style="left:379.00px;top:224.62px;font-size:17px;line-height:18.989px;height:18.99px;color:#cccccc;font-weight:normal;font-style:normal;letter-spacing:-0.112px;">This notebook implements the quantum-based resiliency planning using QAOA.</span>
<div style="left:1824px;top:122px;width:52px;height:28px;background:transparent;border:1px solid #454545;"></div>
<svg style="left:1829px;top:133px;" width="16" height="6" viewBox="0 0 16 6"><circle cx="2.3" cy="3" r="1" fill="#cccccc"/><circle cx="7.5" cy="3" r="1" fill="#cccccc"/><circle cx="12.7" cy="3" r="1" fill="#cccccc"/></svg>
<svg style="left:1853px;top:128px;" width="15" height="16" viewBox="0 0 15 16"><path d="M1.5,3.5 H13.5 M5,3.5 V1.3 H10 V3.5 M2.8,3.5 L3.6,14.5 H11.4 L12.2,3.5 M6.3,6 V12 M8.7,6 V12" fill="none" stroke="#cccccc" stroke-width="1.1"/></svg>
<div style="left:378px;top:276px;width:1524px;height:342px;background:#252526;border:1px solid #3c3c44;"></div>
<div class="code" style="left:413px;top:288.87px;font-size:13px;line-height:19px;letter-spacing:-0.100px"><span style="position:static" class="kw">import</span> math</div>
<div class="code" style="left:413px;top:307.87px;font-size:13px;line-height:19px;letter-spacing:-0.100px"><span style="position:static" class="kw">import</span> random</div>
<div class="code" style="left:413px;top:326.87px;font-size:13px;line-height:19px;letter-spacing:-0.100px"><span style="position:static" class="kw">from</span> itertools <span style="position:static" class="kw">import</span> product</div>
<div class="code" style="left:413px;top:345.87px;font-size:13px;line-height:19px;letter-spacing:-0.100px"><span style="position:static" class="kw">from</span> platform <span style="position:static" class="kw">import</span> node</div>
<div class="code" style="left:413px;top:383.87px;font-size:13px;line-height:19px;letter-spacing:-0.100px"><span style="position:static" class="kw">import</span> matplotlib.pyplot <span style="position:static" class="kw">as</span> plt</div>
<div class="code" style="left:413px;top:402.87px;font-size:13px;line-height:19px;letter-spacing:-0.100px"><span style="position:static" class="kw">import</span> networkx <span style="position:static" class="kw">as</span> nx</div>
<div class="code" style="left:413px;top:421.87px;font-size:13px;line-height:19px;letter-spacing:-0.100px"><span style="position:static" class="kw">import</span> numpy <span style="position:static" class="kw">as</span> np</div>
<div class="code" style="left:413px;top:440.87px;font-size:13px;line-height:19px;letter-spacing:-0.100px"><span style="position:static" class="kw">import</span> pandas <span style="position:static" class="kw">as</span> pd</div>
<div class="code" style="left:413px;top:459.87px;font-size:13px;line-height:19px;letter-spacing:-0.100px"><span style="position:static" class="kw">from</span> scipy.optimize <span style="position:static" class="kw">import</span> minimize</div>
<div class="code" style="left:413px;top:478.87px;font-size:13px;line-height:19px;letter-spacing:-0.100px"><span style="position:static" class="kw">from</span> tqdm <span style="position:static" class="kw">import</span> tqdm</div>
<div class="code" style="left:413px;top:516.87px;font-size:13px;line-height:19px;letter-spacing:-0.100px"><span style="position:static" class="kw">from</span> classiq <span style="position:static" class="kw">import</span> *</div>
<div class="code" style="left:413px;top:535.87px;font-size:13px;line-height:19px;letter-spacing:-0.100px"><span style="position:static" class="kw">from</span> classiq.execution <span style="position:static" class="kw">import</span> ExecutionPreferences, ExecutionSession</div>
<div class="code" style="left:413px;top:573.87px;font-size:13px;line-height:19px;letter-spacing:-0.100px"><span style="position:static" class="cm"># Imports</span></div>
<span class="t" style="left:349.2px;top:602.5px;font-family:'Liberation Mono',monospace;font-size:10px;line-height:12px;color:#a0a0a0;letter-spacing:-0.3px">[35]</span>
<span class="t" style="left:1859.00px;top:602.14px;font-size:12px;line-height:13.404px;height:13.40px;color:#cccccc;font-weight:normal;font-style:normal;letter-spacing:-0.072px;">Python</span>
<span class="t" style="left:378.00px;top:653.57px;font-size:26px;line-height:29.042px;height:29.04px;color:#cccccc;font-weight:normal;font-style:normal;letter-spacing:-0.475px;">Create the graph</span>
<div style="left:378px;top:715px;width:1524px;height:200px;background:#252526;border:1px solid #3c3c44;"></div>
<div class="code" style="left:413px;top:728.07px;font-size:13px;line-height:19px;letter-spacing:-0.100px"><span style="position:static" class="cm"># ---- Graph ----</span></div>
<div class="code" style="left:413px;top:747.07px;font-size:13px;line-height:19px;letter-spacing:-0.100px">graph = nx.Graph<span style="position:static" class="b1">()</span></div>
<div class="code" style="left:413px;top:766.07px;font-size:13px;line-height:19px;letter-spacing:-0.100px">V = <span style="position:static" class="b1">[</span><span style="position:static" class="st">&quot;P1&quot;</span>, <span style="position:static" class="st">&quot;P2&quot;</span>, <span style="position:static" class="st">&quot;S1&quot;</span>, <span style="position:static" class="st">&quot;S2&quot;</span>, <span style="position:static" class="st">&quot;S3&quot;</span><span style="position:static" class="b1">]</span></div>
<div class="code" style="left:413px;top:785.07px;font-size:13px;line-height:19px;letter-spacing:-0.100px">graph.add_nodes_from<span style="position:static" class="b1">(</span>V<span style="position:static" class="b1">)</span></div>
<div class="code" style="left:413px;top:823.07px;font-size:13px;line-height:19px;letter-spacing:-0.100px">E_with_weights = <span style="position:static" class="b1">[</span></div>
<div class="code" style="left:413px;top:842.07px;font-size:13px;line-height:19px;letter-spacing:-0.100px">    <span style="position:static" class="b2">(</span><span style="position:static" class="st">&quot;P1&quot;</span>, <span style="position:static" class="st">&quot;S1&quot;</span>, <span style="position:static" class="b3">{</span><span style="position:static" class="st">&quot;lat&quot;</span>: <span style="position:static" class="nu">1</span>, <span style="position:static" class="st">&quot;perr&quot;</span>: <span style="position:static" class="nu">0.1</span><span style="position:static" class="b3">}</span><span style="position:static" class="b2">)</span>,</div>
<div class="code" style="left:413px;top:861.07px;font-size:13px;line-height:19px;letter-spacing:-0.100px">    <span style="position:static" class="b2">(</span><span style="position:static" class="st">&quot;P1&quot;</span>, <span style="position:static" class="st">&quot;S2&quot;</span>, <span style="position:static" class="b3">{</span><span style="position:static" class="st">&quot;lat&quot;</span>: <span style="position:static" class="nu">1</span>, <span style="position:static" class="st">&quot;perr&quot;</span>: <span style="position:static" class="nu">0.1</span><span style="position:static" class="b3">}</span><span style="position:static" class="b2">)</span>,</div>
<div class="code" style="left:413px;top:880.07px;font-size:13px;line-height:19px;letter-spacing:-0.100px">    <span style="position:static" class="b2">(</span><span style="position:static" class="st">&quot;S2&quot;</span>, <span style="position:static" class="st">&quot;S1&quot;</span>, <span style="position:static" class="b3">{</span><span style="position:static" class="st">&quot;lat&quot;</span>: <span style="position:static" class="nu">1</span>, <span style="position:static" class="st">&quot;perr&quot;</span>: <span style="position:static" class="nu">0.1</span><span style="position:static" class="b3">}</span><span style="position:static" class="b2">)</span>,</div>
<div style="left:413px;top:842px;width:1px;height:50px;background:#404040;"></div>
<span class="t" style="left:350px;top:872px;font-family:'Liberation Mono',monospace;font-size:10px;line-height:12px;color:#a0a0a0;letter-spacing:-0.3px">[36]</span>
<div style="left:0px;top:889px;width:1915px;height:18px;background:#0f7287;"></div>
<div style="left:0px;top:889px;width:32px;height:18px;background:#1d5d6b;"></div>
<svg style="left:9px;top:892px;" width="14" height="12" viewBox="0 0 14 12"><path d="M1.5,7 L5,10.5 M1.5,10.5 L5,7" stroke="#ffffff" stroke-width="0" /><path d="M2,6.5 L5.5,10 M9,1.5 L5.5,5 9,8.5 M2,10.5 L5.5,7" fill="none" stroke="#ffffff" stroke-width="1.1"/></svg>
<div style="left:0px;top:889px;width:32px;height:18px;background:#1b5c68;"></div>
<svg style="left:9px;top:893px;" width="13" height="13" viewBox="0 0 13 13"><path d="M1.4,4 L6,8.2 1.4,11.8 M11,1 L6.4,4.9 11,8.8" fill="none" stroke="#ffffff" stroke-width="1.1"/></svg>
<svg style="left:40px;top:893px;" width="14" height="14" viewBox="0 0 14 14"><circle cx="6.8" cy="6.6" r="5.6" fill="none" stroke="#ffffff" stroke-width="1.1"/><path d="M4.3,4.1 L9.3,9.1 M9.3,4.1 L4.3,9.1" stroke="#ffffff" stroke-width="1.1"/></svg>
<div style="left:0;top:0;width:1915px;height:904px;overflow:hidden">
<span class="t" style="left:57.30px;top:895.14px;font-size:12px;line-height:13.404px;height:13.40px;color:#ffffff;font-weight:normal;font-style:normal;letter-spacing:0.000px;">0</span>
</div>
<svg style="left:67px;top:893px;" width="14" height="13" viewBox="0 0 14 13"><path d="M7,1 L12.8,12 H1.2 Z" fill="none" stroke="#ffffff" stroke-width="1.1"/><path d="M7,5 V9" stroke="#ffffff" stroke-width="1"/></svg>
<div style="left:0;top:0;width:1915px;height:904px;overflow:hidden">
<span class="t" style="left:84.60px;top:895.14px;font-size:12px;line-height:13.404px;height:13.40px;color:#ffffff;font-weight:normal;font-style:normal;letter-spacing:0.000px;">0</span>
</div>
<svg style="left:1561px;top:893px;" width="16" height="14" viewBox="0 0 16 14"><path d="M3,1.5 C1,1.5 1,4 1.5,6 L1,10.5 C1,12 4,13.5 8,13.5 C12,13.5 15,12 15,10.5 L14.5,6 C15,4 15,1.5 13,1.5 C11,1.5 9,2.5 8,4 C7,2.5 5,1.5 3,1.5Z" fill="#ffffff"/><rect x="3.5" y="3.5" width="3" height="2.5" fill="#0f7287"/><rect x="9.5" y="3.5" width="3" height="2.5" fill="#0f7287"/><rect x="5.5" y="9" width="1.5" height="3" fill="#0f7287"/><rect x="9" y="9" width="1.5" height="3" fill="#0f7287"/></svg>
<svg style="left:1594px;top:895px;" width="10" height="10" viewBox="0 0 10 10"><circle cx="5" cy="5" r="3.3" fill="none" stroke="#ffffff" stroke-width="1.6"/></svg>
<div style="left:0;top:0;width:1915px;height:904px;overflow:hidden">
<span class="t" style="left:1609.50px;top:895.14px;font-size:12px;line-height:13.404px;height:13.40px;color:#ffffff;font-weight:normal;font-style:normal;letter-spacing:-0.190px;">395 / 8192 MiB (4.8%)</span>
</div>
<div style="left:0;top:0;width:1915px;height:904px;overflow:hidden">
<span class="t" style="left:1741.60px;top:895.14px;font-size:12px;line-height:13.404px;height:13.40px;color:#ffffff;font-weight:normal;font-style:normal;letter-spacing:-0.119px;">Cell 1 of 30</span>
</div>
<div style="left:0;top:0;width:1915px;height:904px;overflow:hidden">
<span class="t" style="left:1817.40px;top:895.14px;font-size:12px;line-height:13.404px;height:13.40px;color:#ffffff;font-weight:normal;font-style:normal;letter-spacing:-0.419px;">Layout: US</span>
</div>
<svg style="left:1889px;top:891px;" width="16" height="16" viewBox="0 0 16 16"><path d="M2,12.5 H13 L11.7,10.5 V7 C11.7,4.5 10,2.8 7.5,2.8 C5,2.8 3.3,4.5 3.3,7 V10.5 Z M6,13 C6,14.5 9,14.5 9,13" fill="none" stroke="#ffffff" stroke-width="1.1"/><circle cx="11.5" cy="4.5" r="2.8" fill="#ffffff" stroke="#0f7287" stroke-width="0.8"/></svg></body></html>
